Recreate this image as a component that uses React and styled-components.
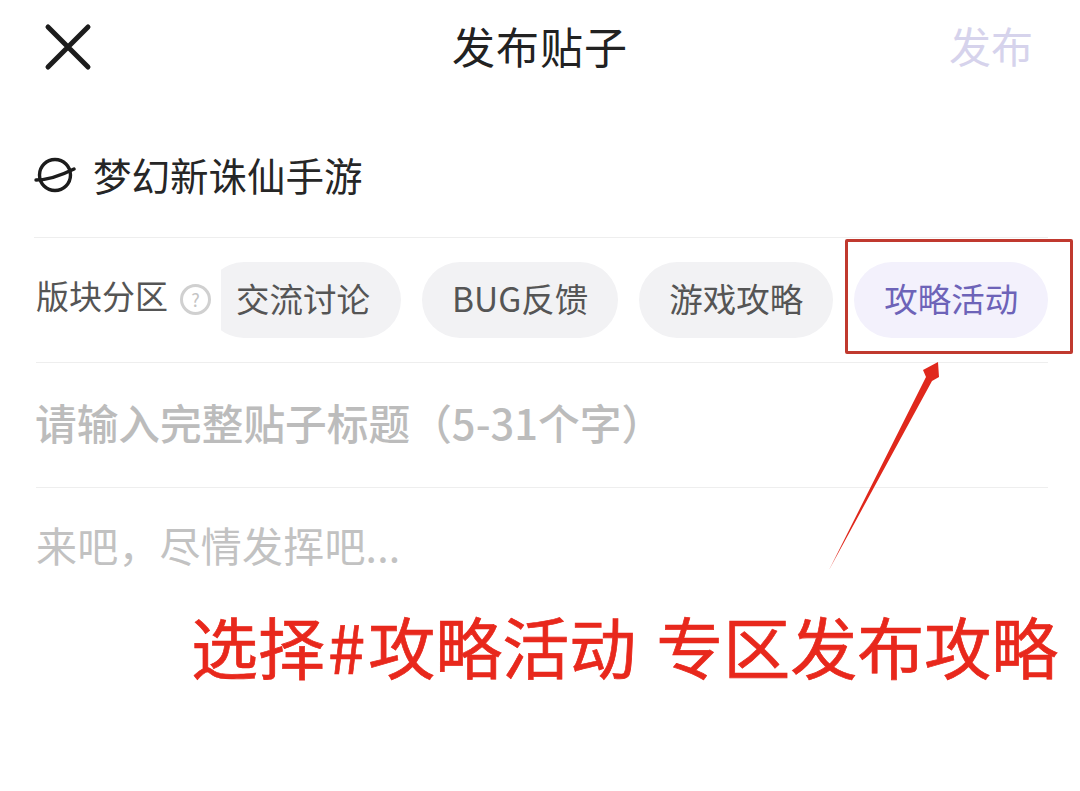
import React from 'react';
import styled, { createGlobalStyle } from 'styled-components';

const GlobalStyle = createGlobalStyle`
  html, body {
    margin: 0;
    padding: 0;
    background: #fff;
  }
  body {
    font-family: "Noto Sans CJK SC", "Noto Sans", sans-serif;
  }
`;

const Page = styled.div`
  position: relative;
  width: 1080px;
  height: 791px;
  overflow: hidden;
  background: #fff;
`;

const Header = styled.header`
  display: grid;
  grid-template-columns: 1fr auto 1fr;
  align-items: center;
  height: 94px;
  padding: 0 47px 0 44px;
`;

const CloseButton = styled.div`
  display: flex;
  justify-self: start;
`;

const Title = styled.h1`
  margin: 0 0 4px 3px;
  font-size: 43px;
  font-weight: 400;
  line-height: 60px;
  letter-spacing: 1px;
  color: #222;
`;

const Publish = styled.div`
  justify-self: end;
  margin-bottom: 4px;
  font-size: 42px;
  line-height: 60px;
  color: #d6d3ec;
`;

const Section = styled.div`
  margin: 0 32px 0 36px;
  border-bottom: 1px solid #eeeeee;
`;

const GameRow = styled(Section)`
  display: flex;
  align-items: center;
  gap: 17px;
  height: 123px;
  padding-top: 20px;
  margin-left: 34px;
`;

const GameName = styled.div`
  margin-bottom: 4px;
  font-size: 38.5px;
  line-height: 54px;
  color: #262626;
`;

const CategoryRow = styled(Section)`
  display: flex;
  align-items: center;
  height: 124px;
`;

const CategoryLabel = styled.div`
  font-size: 33px;
  line-height: 46px;
  color: #555;
  margin-top: -10px;
`;

const HelpIcon = styled.div`
  display: flex;
  align-items: center;
  justify-content: center;
  box-sizing: border-box;
  width: 31px;
  height: 31px;
  margin: -2px 10px 0 12px;
  border: 3px solid #d0d0d0;
  border-radius: 50%;
  font-size: 18px;
  line-height: 1;
  color: #c4c4c4;
`;

const ChipScroller = styled.div`
  display: flex;
  flex: 1;
  gap: 21px;
  margin-right: -4px;
  overflow: hidden;
`;

const Chip = styled.div`
  flex: none;
  height: 76px;
  padding: 0 30px;
  border-radius: 38px;
  font-size: 33.5px;
  line-height: 72px;
  color: ${(p) => (p.$active ? '#6d63b8' : '#555')};
  background: ${(p) => (p.$active ? '#f3f1fc' : '#f2f2f4')};
  &:first-child {
    margin-left: -15px;
    padding-right: 31px;
  }
`;

const TitleInput = styled(Section)`
  display: flex;
  align-items: center;
  height: 124px;
  font-size: 41.7px;
  font-weight: 500;
  line-height: 52px;
  color: #bcbcbc;
  & > span {
    margin: -7px 0 0 -1px;
  }
`;

const BodyInput = styled.div`
  margin: 0 36px;
  padding-top: 28px;
  font-size: 41px;
  line-height: 56px;
  letter-spacing: 0.2px;
  color: #c2c2c2;
`;

const Caption = styled.div`
  margin-top: 28px;
  padding-left: 191px;
  font-size: 67px;
  font-weight: 400;
  line-height: 90px;
  word-spacing: 5px;
  white-space: nowrap;
  color: #e8281c;
  -webkit-text-stroke: 0.7px #e8281c;
`;

const Hash = styled.span`
  margin: 0 3px;
`;

const HighlightBox = styled.div`
  position: absolute;
  left: 845px;
  top: 239px;
  width: 228px;
  height: 115px;
  box-sizing: border-box;
  border: 3px solid #c0392f;
  border-radius: 2px;
`;

const ArrowLayer = styled.svg`
  position: absolute;
  left: 820px;
  top: 355px;
`;

const categories = ['交流讨论', 'BUG反馈', '游戏攻略', '攻略活动'];

function App() {
  return (
    <Page>
      <GlobalStyle />
      <Header>
        <CloseButton>
          <svg width="48" height="48" viewBox="0 0 48 48" fill="none">
            <path d="M4 4 L44 44 M44 4 L4 44" stroke="#1c1c1c" strokeWidth="5" strokeLinecap="round" />
          </svg>
        </CloseButton>
        <Title>发布贴子</Title>
        <Publish>发布</Publish>
      </Header>

      <GameRow>
        <svg width="42" height="38" viewBox="0 0 42 38" fill="none">
          <circle cx="21" cy="18" r="15.5" stroke="#1c1c1c" strokeWidth="3.4" />
          <path d="M2 23 C14 23 28 18 40 12" stroke="#1c1c1c" strokeWidth="3.4" strokeLinecap="round" />
        </svg>
        <GameName>梦幻新诛仙手游</GameName>
      </GameRow>

      <CategoryRow>
        <CategoryLabel>版块分区</CategoryLabel>
        <HelpIcon>?</HelpIcon>
        <ChipScroller>
          {categories.map((name, i) => (
            <Chip key={name} $active={i === categories.length - 1}>{name}</Chip>
          ))}
        </ChipScroller>
      </CategoryRow>

      <TitleInput><span>请输入完整贴子标题（5-31个字）</span></TitleInput>
      <BodyInput>来吧，尽情发挥吧...</BodyInput>
      <Caption>选择<Hash>#</Hash>攻略活动 专区发布攻略</Caption>

      <HighlightBox />
      <ArrowLayer width="130" height="220" viewBox="0 0 130 220">
        <polygon points="9,215 106,22 103,15 118,7 119,22 112,26" fill="#e0281c" />
      </ArrowLayer>
    </Page>
  );
}

export default App;
